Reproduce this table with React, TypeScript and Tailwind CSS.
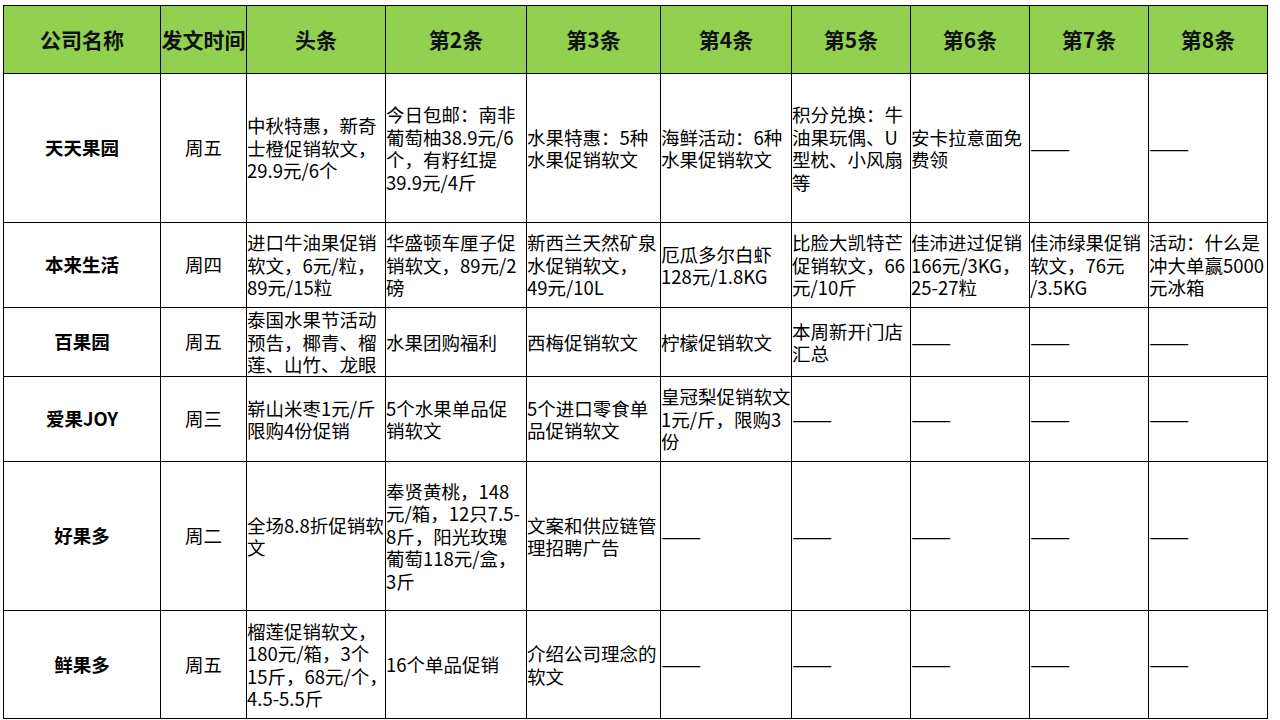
import { Fragment } from 'react'

const headers = ['公司名称', '发文时间', '头条', '第2条', '第3条', '第4条', '第5条', '第6条', '第7条', '第8条']

const colWidths = ['w-[157px]', 'w-[86px]', 'w-[139px]', 'w-[141px]', 'w-[134px]', 'w-[131px]', 'w-[119px]', 'w-[119px]', 'w-[119px]', 'w-[119px]']

const DASH = null

type Cell = string[] | null

const rows: { name: string; day: string; height: string; cells: Cell[] }[] = [
  {
    name: '天天果园',
    day: '周五',
    height: 'h-[149px]',
    cells: [
      ['中秋特惠，新奇', '士橙促销软文，', '29.9元/6个'],
      ['今日包邮：南非', '葡萄柚38.9元/6', '个，有籽红提', '39.9元/4斤'],
      ['水果特惠：5种', '水果促销软文'],
      ['海鲜活动：6种', '水果促销软文'],
      ['积分兑换：牛', '油果玩偶、U', '型枕、小风扇', '等'],
      ['安卡拉意面免', '费领'],
      DASH,
      DASH,
    ],
  },
  {
    name: '本来生活',
    day: '周四',
    height: 'h-[85px]',
    cells: [
      ['进口牛油果促销', '软文，6元/粒，', '89元/15粒'],
      ['华盛顿车厘子促', '销软文，89元/2', '磅'],
      ['新西兰天然矿泉', '水促销软文，', '49元/10L'],
      ['厄瓜多尔白虾', '128元/1.8KG'],
      ['比脸大凯特芒', '促销软文，66', '元/10斤'],
      ['佳沛进过促销', '166元/3KG，', '25-27粒'],
      ['佳沛绿果促销', '软文，76元', '/3.5KG'],
      ['活动：什么是', '冲大单赢5000', '元冰箱'],
    ],
  },
  {
    name: '百果园',
    day: '周五',
    height: 'h-[69px]',
    cells: [
      ['泰国水果节活动', '预告，椰青、榴', '莲、山竹、龙眼'],
      ['水果团购福利'],
      ['西梅促销软文'],
      ['柠檬促销软文'],
      ['本周新开门店', '汇总'],
      DASH,
      DASH,
      DASH,
    ],
  },
  {
    name: '爱果JOY',
    day: '周三',
    height: 'h-[85px]',
    cells: [
      ['崭山米枣1元/斤', '限购4份促销'],
      ['5个水果单品促', '销软文'],
      ['5个进口零食单', '品促销软文'],
      ['皇冠梨促销软文', '1元/斤，限购3', '份'],
      DASH,
      DASH,
      DASH,
      DASH,
    ],
  },
  {
    name: '好果多',
    day: '周二',
    height: 'h-[149px]',
    cells: [
      ['全场8.8折促销软', '文'],
      ['奉贤黄桃，148', '元/箱，12只7.5-', '8斤，阳光玫瑰', '葡萄118元/盒，', '3斤'],
      ['文案和供应链管', '理招聘广告'],
      DASH,
      DASH,
      DASH,
      DASH,
      DASH,
    ],
  },
  {
    name: '鲜果多',
    day: '周五',
    height: 'h-[108px]',
    cells: [
      ['榴莲促销软文，', '180元/箱，3个', '15斤，68元/个，', '4.5-5.5斤'],
      ['16个单品促销'],
      ['介绍公司理念的', '软文'],
      DASH,
      DASH,
      DASH,
      DASH,
      DASH,
    ],
  },
]

export default function App() {
  return (
    <div className="min-h-screen bg-white pl-[3px] pt-[5px] text-black" style={{ fontFamily: '"Noto Sans CJK SC", "Noto Sans", sans-serif' }}>
      <table className="table-fixed border-collapse w-[1264px]">
        <colgroup>
          {colWidths.map((w, i) => (
            <col key={i} className={w} />
          ))}
        </colgroup>
        <thead>
          <tr className="h-[68px] bg-[#92d050]">
            {headers.map((h) => (
              <th key={h} className="border border-black p-0 text-center align-middle text-[21px] font-bold text-[#111]">
                {h}
              </th>
            ))}
          </tr>
        </thead>
        <tbody>
          {rows.map((row) => (
            <tr key={row.name} className={row.height}>
              <td className="border border-black p-0 text-center align-middle text-[18.5px] font-bold">{row.name}</td>
              <td className="border border-black p-0 text-center align-middle text-[18.5px]">{row.day}</td>
              {row.cells.map((cell, i) => (
                <td key={i} className="border border-black p-0 text-left align-middle text-[18.5px] leading-[22.5px] whitespace-nowrap">
                  {cell === null ? (
                    <span className="inline-block origin-left scale-x-[1.3]">——</span>
                  ) : (
                    <p>
                      {cell.map((line, j) => (
                        <Fragment key={j}>
                          {j > 0 && <br />}
                          {line}
                        </Fragment>
                      ))}
                    </p>
                  )}
                </td>
              ))}
            </tr>
          ))}
        </tbody>
      </table>
    </div>
  )
}
